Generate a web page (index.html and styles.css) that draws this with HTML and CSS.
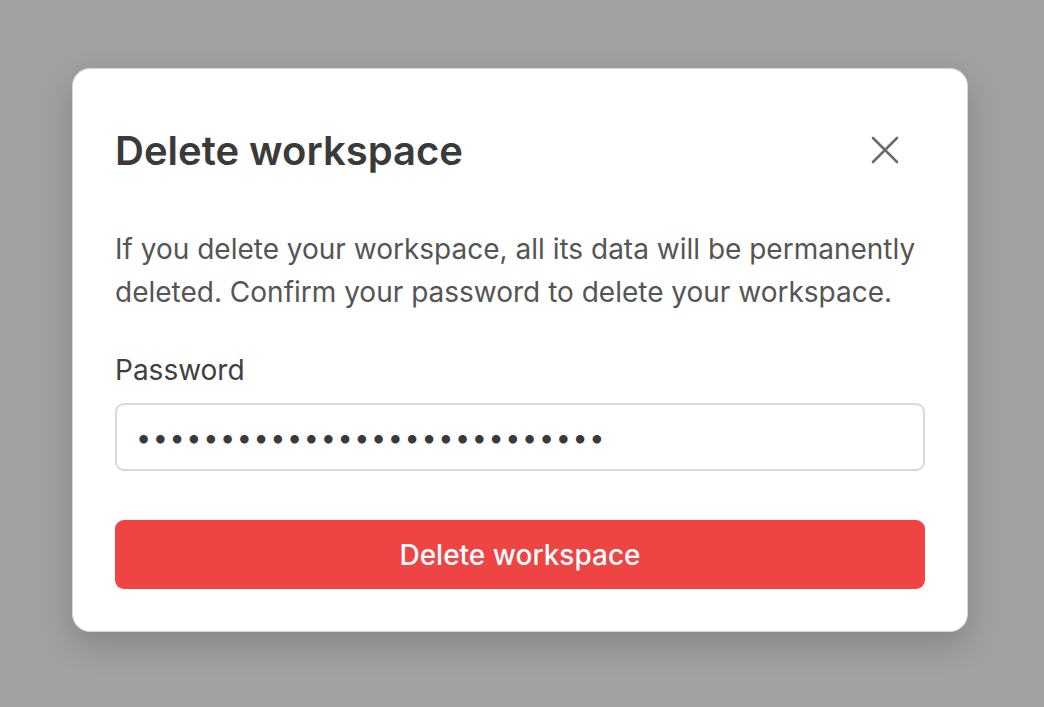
FILE: index.html
```html
<!DOCTYPE html>
<html lang="en">
<head>
  <meta charset="UTF-8" />
  <meta name="viewport" content="width=device-width, initial-scale=1.0" />
  <title>Delete workspace</title>
  <link rel="stylesheet" href="styles.css">
</head>
<body>
  <div class="modal">
    <div class="header">
      <h2>Delete workspace</h2>
      <button class="close" aria-label="Close">
        <svg width="28" height="28" viewBox="0 0 28 28" fill="none" stroke="#6b6b6b" stroke-width="2.6" stroke-linecap="round">
          <path d="M2 2 L26 26 M26 2 L2 26" />
        </svg>
      </button>
    </div>
    <p class="text">If you delete your workspace, all its data will be permanently deleted. Confirm your password to delete your workspace.</p>
    <label class="label" for="password">Password</label>
    <input class="input" id="password" type="password" value="abcdefghijklmnopqrstuvwxyz12" />
    <button class="delete">Delete workspace</button>
  </div>
</body>
</html>
```

FILE: styles.css
```css
body {
  margin: 0;
  background: #a1a1a1;
  height: 707px;
  font-family: Inter, "Noto Sans", sans-serif;
  display: flex;
  align-items: flex-start;
}

.modal {
  margin: 68px 0 0 72px;
  width: 810px;
  padding: 42px;
  background: #fff;
  border: 1px solid #d6d6d6;
  border-radius: 18px;
  box-shadow: 0 12px 32px rgba(0,0,0,0.18);
  display: flex;
  flex-direction: column;
}

.header {
  display: flex;
  justify-content: space-between;
  align-items: center;
  height: 78px;
}

.header h2 {
  margin: 0;
  font-size: 40px;
  font-weight: 600;
  color: #3a3a3a;
}

.close {
  background: none;
  border: none;
  padding: 0;
  margin-right: 26px;
  width: 28px;
  height: 28px;
  display: flex;
}

.text {
  margin: 39px 0 0;
  font-size: 28px;
  line-height: 43px;
  color: #555;
}

.label {
  margin-top: 38px;
  font-size: 28px;
  line-height: 36px;
  color: #3f3f3f;
}

.input {
  margin-top: 15px;
  height: 68px;
  box-sizing: border-box;
  border: 2px solid #d9d9d9;
  border-radius: 9px;
  padding: 0 19px;
  font-family: inherit;
  font-size: 27px;
  letter-spacing: 1.6px;
  color: #3a3a3a;
  outline: none;
}

.delete {
  margin-top: 49px;
  height: 69px;
  border: none;
  border-radius: 9px;
  background: #ef4444;
  color: #fff;
  font-family: inherit;
  font-size: 28px;
  font-weight: 500;
}
```
